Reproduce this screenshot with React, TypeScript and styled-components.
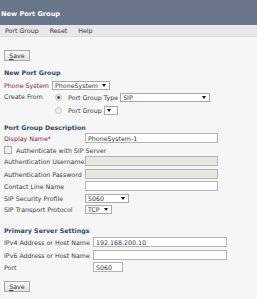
import styled, { createGlobalStyle } from "styled-components";

const GlobalStyle = createGlobalStyle`
  body {
    margin: 0;
    background: #f6f6f6;
    font-family: "DejaVu Sans", Verdana, sans-serif;
    font-size: 6.3px;
    color: #3c3c3c;
  }
`;

const Header = styled.div`
  height: 25px;
  display: flex;
  align-items: center;
  padding: 2px 0 0 1px;
  box-sizing: border-box;
  background: #69758a;
  color: #fff;
  font-weight: bold;
  font-size: 6.6px;
`;
const MenuBar = styled.div`
  height: 12px;
  display: flex;
  align-items: center;
  gap: 11px;
  padding-left: 5px;
  background: #e8e8e8;
  border-bottom: 1px solid #dcdcdc;
  box-sizing: border-box;
  color: #333;
`;
const Content = styled.div`
  padding: 0 4px;
  display: flex;
  flex-direction: column;
`;
const Button = styled.button<{ $top: number }>`
  align-self: flex-start;
  margin-top: ${(p) => p.$top}px;
  height: 11px;
  width: 26px;
  padding: 0;
  font: inherit;
  color: #333;
  border: 1px solid #a8a8a8;
  background: linear-gradient(#fafafa, #e2e2e2);
  u {
    text-decoration: underline;
  }
`;
const SectionTitle = styled.div<{ $top: number }>`
  margin-top: ${(p) => p.$top}px;
  height: 9px;
  line-height: 9px;
  font-weight: bold;
  color: #34495e;
`;
const Row = styled.div<{ $top?: number; $h?: number }>`
  display: flex;
  align-items: center;
  margin-top: ${(p) => p.$top ?? 3}px;
  height: ${(p) => p.$h ?? 10}px;
`;
const Label = styled.div<{ $w: number; $req?: boolean }>`
  width: ${(p) => p.$w}px;
  flex: none;
  color: ${(p) => (p.$req ? "#7b2447" : "#3c3c3c")};
  white-space: nowrap;
`;
const Input = styled.input<{ $w: number; $off?: boolean }>`
  width: ${(p) => p.$w}px;
  height: 10px;
  box-sizing: border-box;
  padding: 0 2px;
  font: inherit;
  color: #3a3040;
  border: 1px solid #b4b4b4;
  background: ${(p) => (p.$off ? "#e8e8e2" : "#fff")};
  outline: none;
`;
const Select = styled.div<{ $w: number }>`
  width: ${(p) => p.$w}px;
  height: 9px;
  box-sizing: border-box;
  display: flex;
  align-items: center;
  justify-content: space-between;
  padding: 0 3px 0 2px;
  border: 1px solid #a8a8a8;
  background: #fff;
  color: #3a3040;
  &::after {
    content: "";
    border-left: 2px solid transparent;
    border-right: 2px solid transparent;
    border-top: 3px solid #111;
  }
`;
const Radio = styled.span<{ $on?: boolean }>`
  width: 5px;
  height: 5px;
  border-radius: 50%;
  border: 1px solid #c4c4c4;
  background: ${(p) => (p.$on ? "radial-gradient(#555 35%, #eee 45%)" : "#eee")};
  margin: 0 4px 0 2px;
  flex: none;
`;
const Check = styled.span`
  width: 6px;
  height: 6px;
  border: 1px solid #aaa;
  background: #f0f0f0;
  margin-right: 4px;
  flex: none;
`;
const Options = styled.div`
  display: flex;
  flex-direction: column;
  gap: 4px;
`;
const Option = styled.div`
  display: flex;
  align-items: center;
  height: 9px;
  gap: 2px;
`;
const CreateRow = styled.div`
  display: flex;
  align-items: flex-start;
  margin-top: 3px;
`;

export default function App() {
  return (
    <>
      <GlobalStyle />
      <Header>New Port Group</Header>
      <MenuBar>
        <span>Port Group</span>
        <span>Reset</span>
        <span>Help</span>
      </MenuBar>
      <Content>
        <Button $top={13}>
          <u>S</u>ave
        </Button>
        <SectionTitle $top={7}>New Port Group</SectionTitle>
        <Row $top={3}>
          <Label $w={48} $req>
            Phone System
          </Label>
          <Select $w={58}>PhoneSystem</Select>
        </Row>
        <CreateRow>
          <Label $w={49}>Create From</Label>
          <Options>
            <Option>
              <Radio $on />
              Port Group Type
              <Select $w={90}>SIP</Select>
            </Option>
            <Option>
              <Radio />
              Port Group
              <Select $w={14} />
            </Option>
          </Options>
        </CreateRow>
        <SectionTitle $top={8}>Port Group Description</SectionTitle>
        <Row $top={1}>
          <Label $w={81} $req>
            Display Name*
          </Label>
          <Input $w={133} defaultValue="PhoneSystem-1" />
        </Row>
        <Row $top={2} $h={10}>
          <Check />
          Authenticate with SIP Server
        </Row>
        <Row $top={1}>
          <Label $w={81}>Authentication Username</Label>
          <Input $w={133} $off disabled />
        </Row>
        <Row>
          <Label $w={81}>Authentication Password</Label>
          <Input $w={133} $off disabled />
        </Row>
        <Row $top={2}>
          <Label $w={81}>Contact Line Name</Label>
          <Input $w={133} />
        </Row>
        <Row $top={2}>
          <Label $w={81}>SIP Security Profile</Label>
          <Select $w={44}>5060</Select>
        </Row>
        <Row $top={1}>
          <Label $w={81}>SIP Transport Protocol</Label>
          <Select $w={27}>TCP</Select>
        </Row>
        <SectionTitle $top={12}>Primary Server Settings</SectionTitle>
        <Row $top={2}>
          <Label $w={89}>IPv4 Address or Host Name</Label>
          <Input $w={134} defaultValue="192.168.200.10" />
        </Row>
        <Row>
          <Label $w={89}>IPv6 Address or Host Name</Label>
          <Input $w={134} />
        </Row>
        <Row $top={2}>
          <Label $w={89}>Port</Label>
          <Input $w={30} defaultValue="5060" />
        </Row>
        <Button $top={9}>
          <u>S</u>ave
        </Button>
      </Content>
    </>
  );
}
